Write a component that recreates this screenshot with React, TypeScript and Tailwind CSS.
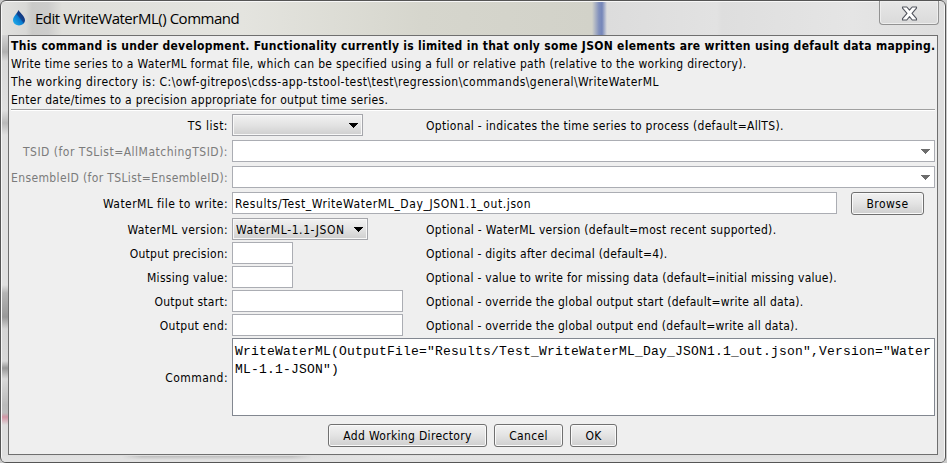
import type { ReactNode } from "react";

const FIELD = "h-[22px] border border-[#abadb3] bg-white";

function Row({ label, disabled, h = "h-[22px]", gap = "mt-[2px]", tracking = "tracking-[0.3px]", children }: { label: string; disabled?: boolean; h?: string; gap?: string; tracking?: string; children?: ReactNode }) {
  return (
    <div className={`flex items-center ${h} ${gap}`}>
      <div className={`w-[219px] shrink-0 pt-[2px] text-right whitespace-nowrap ${tracking} ${disabled ? "text-[#7b7b7b]" : ""}`}>{label}</div>
      <div className="ml-[4px] flex flex-1 items-center">{children}</div>
    </div>
  );
}

function Arrow({ color = "#000000" }: { color?: string }) {
  return (
    <svg width="9" height="5" viewBox="0 0 9 5" shapeRendering="crispEdges">
      <path d="M0 0H9V1H8V2H7V3H6V4H5V5H4V4H3V3H2V2H1V1H0Z" fill={color} />
    </svg>
  );
}

function Button({ width, children }: { width: string; children: ReactNode }) {
  return (
    <button className={`flex h-[23px] items-center justify-center rounded-[3px] border border-[#707070] bg-linear-to-b from-[#f2f2f2] via-[#e3e3e3] via-50% to-[#cfcfcf] shadow-[inset_0_0_0_1px_#fafafa] ${width}`}>
      {children}
    </button>
  );
}

function Select({ width, children }: { width: string; children?: ReactNode }) {
  return (
    <div className={`flex h-[22px] items-center justify-between border border-[#a5a6ab] bg-linear-to-b from-[#f2f2f2] via-[#e3e3e3] via-50% to-[#cfcfcf] pr-[4px] pl-[3px] shadow-[inset_0_0_0_1px_#f8f8f8] ${width}`}>
      <span className="pt-[2px] tracking-[0.6px] whitespace-nowrap">{children}</span>
      <Arrow />
    </div>
  );
}

function Hint({ gap, tracking = "tracking-[0.26px]", children }: { gap: string; tracking?: string; children: ReactNode }) {
  return <span className={`pt-[2px] whitespace-nowrap ${tracking} ${gap}`}>{children}</span>;
}

export default function App() {
  return (
    <div className="h-[463px] w-[947px] overflow-hidden bg-[#c9c9c9] font-['DejaVu_Sans_Condensed','DejaVu_Sans',sans-serif] text-[12px] leading-[18px] text-black [font-stretch:condensed]">
      <div className="relative flex h-[463px] w-[946px] flex-col overflow-hidden rounded-[6px] border border-[#555] bg-[#dedede] shadow-[inset_0_0_0_1px_#f7f7f7]">
        <div className="mx-px mt-px flex h-[33px] shrink-0 items-start bg-[linear-gradient(90deg,#e1e1df_0px,#d8d8d6_24px,#cacac8_30px,#cccccb_46px,#dfdfdb_60px,#e4e4df_240px,#d6d6cd_420px,#d2d2c9_590px,#8190bd_597px,#7586b9_600px,#dcdcdc_605px,#e2e2e2_715px,#dedede_720px,#e5e5e5_850px,#dedede_943px)]">
          <svg className="mt-[8px] ml-[10px]" width="14" height="16" viewBox="0 0 14 16">
            <defs>
              <linearGradient id="drop" x1="0" y1="1" x2="1" y2="0">
                <stop offset="0" stopColor="#25b5ee" />
                <stop offset=".48" stopColor="#087bd0" />
                <stop offset=".55" stopColor="#10458f" />
                <stop offset="1" stopColor="#17236d" />
              </linearGradient>
            </defs>
            <path d="M6.5 0C8 3 13 6.4 13 10.2C13 13.3 10 15.4 7 15.4C4 15.4 1 13.3 1 10.2C1 6.4 5.3 3.3 6.5 0Z" fill="url(#drop)" />
          </svg>
          <span className="mt-[5px] ml-[9px] font-['Open_Sans','Noto_Sans',sans-serif] text-[15px] leading-[22px] tracking-[-0.48px] whitespace-nowrap [font-stretch:normal]">Edit WriteWaterML() Command</span>
          <div className="mt-[-1px] mr-[5px] ml-auto flex h-[24px] w-[60px] items-center justify-center rounded-b-[4px] border border-t-0 border-[#929292] bg-linear-to-b from-[#e7e7e7] to-[#dadada] shadow-[inset_0_0_0_1px_#eeeeee]">
            <svg className="mt-[1px] ml-[1px]" width="17" height="15" viewBox="0 0 17 15">
              <path d="M1.5 1H5.8L8.5 4.2L11.2 1H15.5V2.2L11 7.4L15.5 12.7V14H11.2L8.5 10.7L5.8 14H1.5V12.7L6 7.4L1.5 2.2Z" fill="#fff" stroke="#53565f" strokeWidth="1.1" strokeLinejoin="round" />
            </svg>
          </div>
        </div>
        <div className="mx-px flex h-[421px] shrink-0 bg-[linear-gradient(180deg,#d4d4d4_0px,#b0b0b0_17px,#d9d9d9_26px,#e0e0e0_75px,#bababa_88px,#e0e0e0_100px,#e0e0e0_250px,#b5b5b5_258px,#999_282px,#d5d5d5_294px,#d8d8d8_326px,#989898_333px,#d9d9d9_344px,#bbb_370px,#bdbdbd_378px,#d296a5_382px,#dedede_390px,#dedede_421px)]">
          <div className="ml-[6px] flex h-[420px] w-[930px] shrink-0 flex-col border border-[#6f6f6f] bg-[#efefef] pt-px">
            <div className="mx-[2px] h-[73px] border-b border-[#a0a0a0] whitespace-nowrap shadow-[0_1px_0_#fff]">
              <div className="font-bold tracking-[0.29px]">This command is under development. Functionality currently is limited in that only some JSON elements are written using default data mapping.</div>
              <div className="tracking-[0.31px]">Write time series to a WaterML format file, which can be specified using a full or relative path (relative to the working directory).</div>
              <div className="tracking-[0.44px]">The working directory is: C:\owf-gitrepos\cdss-app-tstool-test\test\regression\commands\general\WriteWaterML</div>
              <div className="tracking-[0.3px]">Enter date/times to a precision appropriate for output time series.</div>
            </div>
            <Row label="TS list:" gap="mt-[4px]" tracking="tracking-[0.5px]">
              <Select width="w-[131px]" />
              <Hint gap="ml-[63px]" tracking="tracking-[0.31px]">Optional - indicates the time series to process (default=AllTS).</Hint>
            </Row>
            <Row label="TSID (for TSList=AllMatchingTSID):" disabled gap="mt-[4px]" tracking="tracking-[0.5px]">
              <div className={`${FIELD} flex w-[703px] items-center justify-end pr-[4px]`}><Arrow color="#6d6d6d" /></div>
            </Row>
            <Row label="EnsembleID (for TSList=EnsembleID):" disabled gap="mt-[4px]" tracking="tracking-[0.37px]">
              <div className={`${FIELD} flex w-[703px] items-center justify-end pr-[4px]`}><Arrow color="#6d6d6d" /></div>
            </Row>
            <Row label="WaterML file to write:" gap="mt-[4px]" tracking="tracking-[0.43px]">
              <div className={`${FIELD} flex w-[605px] items-center pt-[2px] pl-[2px] tracking-[0.59px]`}>Results/Test_WriteWaterML_Day_JSON1.1_out.json</div>
              <div className="-mb-px ml-[14px] tracking-[0.45px]"><Button width="w-[73px]">Browse</Button></div>
            </Row>
            <Row label="WaterML version:" gap="mt-[4px]" tracking="tracking-[0.42px]">
              <Select width="w-[136px]">WaterML-1.1-JSON</Select>
              <Hint gap="ml-[58px]" tracking="tracking-[0.31px]">Optional - WaterML version (default=most recent supported).</Hint>
            </Row>
            <Row label="Output precision:">
              <div className={`${FIELD} w-[61px]`} />
              <Hint gap="ml-[133px]">Optional - digits after decimal (default=4).</Hint>
            </Row>
            <Row label="Missing value:">
              <div className={`${FIELD} w-[61px]`} />
              <Hint gap="ml-[133px]">Optional - value to write for missing data (default=initial missing value).</Hint>
            </Row>
            <Row label="Output start:">
              <div className={`${FIELD} w-[171px]`} />
              <Hint gap="ml-[23px]">Optional - override the global output start (default=write all data).</Hint>
            </Row>
            <Row label="Output end:">
              <div className={`${FIELD} w-[171px]`} />
              <Hint gap="ml-[23px]">Optional - override the global output end (default=write all data).</Hint>
            </Row>
            <Row label="Command:" h="h-[78px]" tracking="tracking-[0.45px]">
              <div className="h-[78px] w-[703px] border border-[#828790] bg-white pt-[4px] pl-[2px] font-['Liberation_Mono',monospace] text-[13px] tracking-[0.2px] whitespace-pre">{'WriteWaterML(OutputFile="Results/Test_WriteWaterML_Day_JSON1.1_out.json",Version="Water\nML-1.1-JSON")'}</div>
            </Row>
            <div className="mt-[8px] ml-[319px] flex gap-[7px] tracking-[0.33px]">
              <Button width="w-[159px]">Add Working Directory</Button>
              <Button width="w-[69px]">Cancel</Button>
              <Button width="w-[47px]">OK</Button>
            </div>
          </div>
          <div className="flex-1 bg-[#dedede]" />
        </div>
        <div className="mx-px flex-1 bg-[linear-gradient(180deg,transparent_0px,#e2e2e2_4px),linear-gradient(90deg,#e0e0e0_0px,#e0e0e0_120px,#bdbdbd_140px,#bdbdbd_290px,#dfdfdf_310px,#e6e6e6_400px,#dedede_600px)]" />
      </div>
    </div>
  );
}
